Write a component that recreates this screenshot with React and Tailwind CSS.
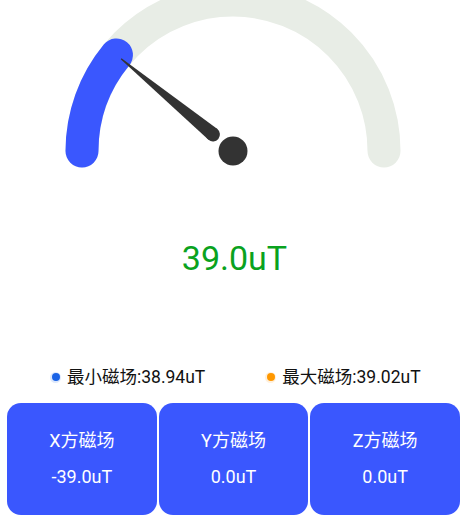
import React from 'react'

const cx = 233
const cy = 151
const r = 151

function pointAt(deg) {
  const rad = (deg * Math.PI) / 180
  return [cx + r * Math.cos(rad), cy - r * Math.sin(rad)]
}

function Gauge({ angle }) {
  const [sx, sy] = pointAt(180)
  const [ex, ey] = pointAt(0)
  const [vx, vy] = pointAt(180 - angle)

  return (
    <svg width="469" height="180" viewBox="0 0 469 180" className="block">
      <path
        d={`M ${sx} ${sy} A ${r} ${r} 0 0 1 ${ex} ${ey}`}
        fill="none"
        stroke="#e8ede6"
        strokeWidth="33"
        strokeLinecap="round"
      />
      <path
        d={`M ${sx} ${sy} A ${r} ${r} 0 0 1 ${vx} ${vy}`}
        fill="none"
        stroke="#3a57fe"
        strokeWidth="33"
        strokeLinecap="round"
      />
      <g transform={`translate(${cx} ${cy}) rotate(${angle})`}>
        <polygon points="-26,-7 -145,-0.6 -145,0.6 -26,7" fill="#333333" />
        <circle cx="-26" cy="0" r="7" fill="#333333" />
      </g>
      <circle cx={cx} cy={cy} r="14.5" fill="#333333" />
    </svg>
  )
}

function LegendItem({ color, ring, label }) {
  return (
    <div className="flex items-center gap-[6px]">
      <span
        className="flex h-[11px] w-[11px] items-center justify-center rounded-full"
        style={{ backgroundColor: ring }}
      >
        <span className="h-[8px] w-[8px] rounded-full" style={{ backgroundColor: color }} />
      </span>
      <span className="text-[17.5px] leading-6 text-[#111111]">{label}</span>
    </div>
  )
}

function AxisCard({ title, value }) {
  return (
    <div className="flex h-[112px] flex-col items-center justify-center gap-3 rounded-[14px] bg-[#3a57fe] text-[18px] leading-6 text-white">
      <span>{title}</span>
      <span>{value}</span>
    </div>
  )
}

export default function App() {
  return (
    <div
      className="flex h-[521px] w-[469px] flex-col overflow-hidden bg-white"
      style={{ fontFamily: 'Roboto, "Noto Sans CJK SC", sans-serif' }}
    >
      <Gauge angle={39.5} />

      <div className="mt-[58px] text-center text-[34px] leading-10 text-[#0aa21e]">39.0uT</div>

      <div className="mt-[87px] flex items-center gap-[60px] pl-[50px]">
        <LegendItem color="#1a63e6" ring="#dde8fb" label="最小磁场:38.94uT" />
        <LegendItem color="#ff9800" ring="#fff0dc" label="最大磁场:39.02uT" />
      </div>

      <div className="mt-[14px] grid grid-cols-3 gap-[2px] pl-[7px] pr-[9px]">
        <AxisCard title="X方磁场" value="-39.0uT" />
        <AxisCard title="Y方磁场" value="0.0uT" />
        <AxisCard title="Z方磁场" value="0.0uT" />
      </div>
    </div>
  )
}
